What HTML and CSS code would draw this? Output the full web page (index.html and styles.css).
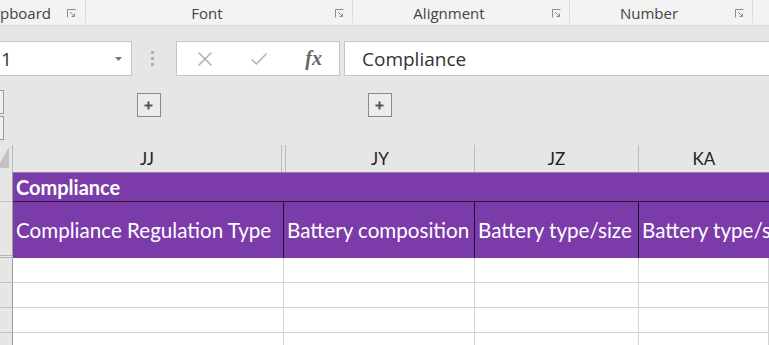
FILE: index.html
```html
<!DOCTYPE html>
<html>
<head>
  <link rel="stylesheet" href="styles.css">
</head>
<body>
  <div class="ribbon">
    <div class="group group-first">
      <div class="group-name clip"><span>Clipboard</span></div>
      <svg class="launcher" width="9" height="9" viewBox="0 0 9 9"><path d="M0.5 8.5V0.5H8.5" /><path d="M3 3L7.5 7.5M4.5 7.5H7.5V4.5" /></svg>
    </div>
    <div class="group group-font">
      <div class="group-name">Font</div>
      <svg class="launcher" width="9" height="9" viewBox="0 0 9 9"><path d="M0.5 8.5V0.5H8.5" /><path d="M3 3L7.5 7.5M4.5 7.5H7.5V4.5" /></svg>
    </div>
    <div class="group group-align">
      <div class="group-name">Alignment</div>
      <svg class="launcher" width="9" height="9" viewBox="0 0 9 9"><path d="M0.5 8.5V0.5H8.5" /><path d="M3 3L7.5 7.5M4.5 7.5H7.5V4.5" /></svg>
    </div>
    <div class="group group-number">
      <div class="group-name">Number</div>
      <svg class="launcher" width="9" height="9" viewBox="0 0 9 9"><path d="M0.5 8.5V0.5H8.5" /><path d="M3 3L7.5 7.5M4.5 7.5H7.5V4.5" /></svg>
    </div>
    <div class="group group-rest"></div>
  </div>

  <div class="formula-row">
    <div class="name-box">
      <span>1</span>
      <svg class="dropdown" width="7" height="4" viewBox="0 0 7 4"><path d="M0 0H7L3.5 4Z" /></svg>
    </div>
    <div class="grip"><span></span><span></span><span></span></div>
    <div class="fx-buttons">
      <svg class="fx-icon" width="16" height="16" viewBox="0 0 16 16"><path d="M1.5 1.5L14.5 14.5M14.5 1.5L1.5 14.5" /></svg>
      <svg class="fx-icon" width="18" height="14" viewBox="0 0 18 14"><path d="M1.5 7.5L6.5 12L16.5 1.5" /></svg>
      <span class="fx-label">fx</span>
    </div>
    <div class="formula-bar">Compliance</div>
  </div>

  <div class="sheet">
    <div class="grid outline-row">
      <div class="outline-levels">
        <div class="level-box"></div>
        <div class="level-box"></div>
      </div>
      <div class="outline-cell">
        <div class="plus-box"><svg width="9" height="9" viewBox="0 0 9 9"><path d="M4.5 0.5V8.5M0.5 4.5H8.5" /></svg></div>
      </div>
      <div class="outline-cell">
        <div class="plus-box"><svg width="9" height="9" viewBox="0 0 9 9"><path d="M4.5 0.5V8.5M0.5 4.5H8.5" /></svg></div>
      </div>
      <div></div>
      <div></div>
    </div>

    <div class="grid col-heads">
      <div class="corner"><svg width="12" height="21" viewBox="0 0 12 21"><path d="M12 0V21H0Z" /></svg></div>
      <div class="col-head col-jj">JJ</div>
      <div class="col-head col-jy">JY</div>
      <div class="col-head">JZ</div>
      <div class="col-head col-last">KA</div>
    </div>

    <div class="grid row row-title">
      <div class="row-head"></div>
      <div class="cell title-cell">Compliance</div>
    </div>

    <div class="grid row row-labels">
      <div class="row-head row-head-hidden"></div>
      <div class="cell label-cell">Compliance Regulation Type</div>
      <div class="cell label-cell">Battery composition</div>
      <div class="cell label-cell">Battery type/size</div>
      <div class="cell label-cell label-last">Battery type/size</div>
    </div>

    <div class="grid row row-data">
      <div class="row-head"></div>
      <div class="cell"></div>
      <div class="cell"></div>
      <div class="cell"></div>
      <div class="cell"></div>
    </div>
    <div class="grid row row-data">
      <div class="row-head"></div>
      <div class="cell"></div>
      <div class="cell"></div>
      <div class="cell"></div>
      <div class="cell"></div>
    </div>
    <div class="grid row row-data">
      <div class="row-head"></div>
      <div class="cell"></div>
      <div class="cell"></div>
      <div class="cell"></div>
      <div class="cell"></div>
    </div>
    <div class="grid row row-data">
      <div class="row-head"></div>
      <div class="cell"></div>
      <div class="cell"></div>
      <div class="cell"></div>
      <div class="cell"></div>
    </div>
  </div>
</body>
</html>
```

FILE: styles.css
```css
* {
  box-sizing: border-box;
}
body {
  margin: 0;
  width: 769px;
  height: 345px;
  overflow: hidden;
  background: #e6e6e6;
  font-family: "Open Sans", "Noto Sans", sans-serif;
  color: #444;
}

/* ribbon group captions */
.ribbon {
  display: flex;
  height: 26px;
  background: #f3f3f3;
  border-bottom: 1px solid #d8d8d8;
}
.group {
  display: flex;
  align-items: center;
  height: 23px;
  border-right: 1px solid #dcdcdc;
  padding-right: 8px;
  padding-top: 2px;
}
.group-first { width: 86px; }
.group-font { width: 267px; }
.group-align { width: 217px; }
.group-number { width: 183px; }
.group-rest { flex: 1; border-right: none; }
.group-name {
  flex: 1;
  text-align: center;
  font-size: 15px;
  color: #444;
  white-space: nowrap;
  margin-right: 7px;
}
.group-name.clip {
  flex: none;
  width: 51px;
  display: flex;
  justify-content: flex-end;
  overflow: hidden;
  margin-right: 16px;
}
.launcher {
  fill: none;
  stroke: #8c8c8c;
  stroke-width: 1;
  margin-top: 2px;
}

/* name box and formula bar */
.formula-row {
  display: flex;
  align-items: center;
  height: 35px;
  margin-top: 15px;
}
.name-box {
  display: flex;
  align-items: center;
  justify-content: space-between;
  width: 132px;
  height: 35px;
  background: #fff;
  border: 1px solid #c6c6c6;
  border-left: none;
  padding: 0 9px 0 1px;
  font-size: 19px;
  color: #333;
}
.dropdown {
  fill: #777;
}
.grip {
  display: flex;
  flex-direction: column;
  gap: 3px;
  margin: 0 22px 0 19px;
}
.grip span {
  width: 3px;
  height: 3px;
  background: #b0b0b0;
}
.fx-buttons {
  display: flex;
  align-items: center;
  justify-content: space-between;
  width: 164px;
  height: 35px;
  background: #fff;
  border: 1px solid #c6c6c6;
  padding: 0 17px 0 20px;
}
.fx-icon {
  fill: none;
  stroke: #b3b3b3;
  stroke-width: 1.6;
}
.fx-label {
  font-family: "Liberation Serif", serif;
  font-style: italic;
  font-weight: bold;
  font-size: 20px;
  color: #666;
}
.formula-bar {
  flex: 1;
  height: 35px;
  margin-left: 4px;
  background: #fff;
  border-top: 1px solid #c6c6c6;
  border-bottom: 1px solid #c6c6c6;
  border-left: 1px solid #c6c6c6;
  padding-left: 17px;
  line-height: 34px;
  font-size: 19px;
  color: #333;
}

/* sheet */
.grid {
  display: grid;
  grid-template-columns: 13px 271px 191px 164px 1fr;
}
.outline-row {
  height: 69px;
}
.outline-levels {
  display: flex;
  flex-direction: column;
  gap: 2px;
  padding-top: 14px;
}
.level-box {
  width: 4px;
  height: 24px;
  border: 1px solid #999;
  border-left: none;
  background: #f0f0f0;
}
.outline-cell {
  display: flex;
  justify-content: center;
  padding-top: 17px;
}
.plus-box {
  display: flex;
  align-items: center;
  justify-content: center;
  width: 24px;
  height: 24px;
  border: 1px solid #8a8a8a;
  background: #ececec;
}
.plus-box svg {
  fill: none;
  stroke: #555;
  stroke-width: 2;
}

.col-heads {
  height: 27px;
}
.corner {
  display: flex;
  align-items: flex-end;
  padding-bottom: 4px;
  border-right: 1px solid #b8b8b8;
}
.corner svg {
  fill: #c2c2c2;
  margin-left: -3px;
}
.col-head {
  display: flex;
  align-items: center;
  justify-content: center;
  border-right: 1px solid #bcbcbc;
  font-family: "Lato", sans-serif;
  font-size: 17px;
  color: #222;
}
.col-jj {
  margin-right: 2px;
}
.col-jy {
  margin-left: 1px;
  border-left: 1px solid #bcbcbc;
}
.col-last {
  border-right: none;
}

.row-head {
  background: #e6e6e6;
  border-right: 1px solid #9e9e9e;
  border-bottom: 1px solid #c4c4c4;
}
.row-head-hidden {
  border-bottom: 3px double #b4b4b4;
}
.cell {
  background: #fff;
  border-right: 1px solid #d4d4d4;
  border-bottom: 1px solid #d4d4d4;
  font-family: "Lato", sans-serif;
  white-space: nowrap;
  overflow: hidden;
}
.row-title {
  height: 30px;
}
.title-cell {
  grid-column: 2 / 6;
  background: #7b3ba9;
  border-top: 1px solid #9b7bb5;
  border-right: none;
  border-bottom: 1px solid #2a1836;
  color: #fff;
  font-weight: bold;
  font-size: 20px;
  padding-left: 3px;
  line-height: 28px;
}
.row-labels {
  height: 56px;
}
.label-cell {
  background: #7b3ba9;
  border-right: 1px solid #1c1024;
  border-bottom: none;
  color: #fff;
  font-size: 20.6px;
  padding-left: 3px;
  line-height: 56px;
}
.label-last {
  border-right: none;
}
.row-data {
  height: 25px;
}
```
